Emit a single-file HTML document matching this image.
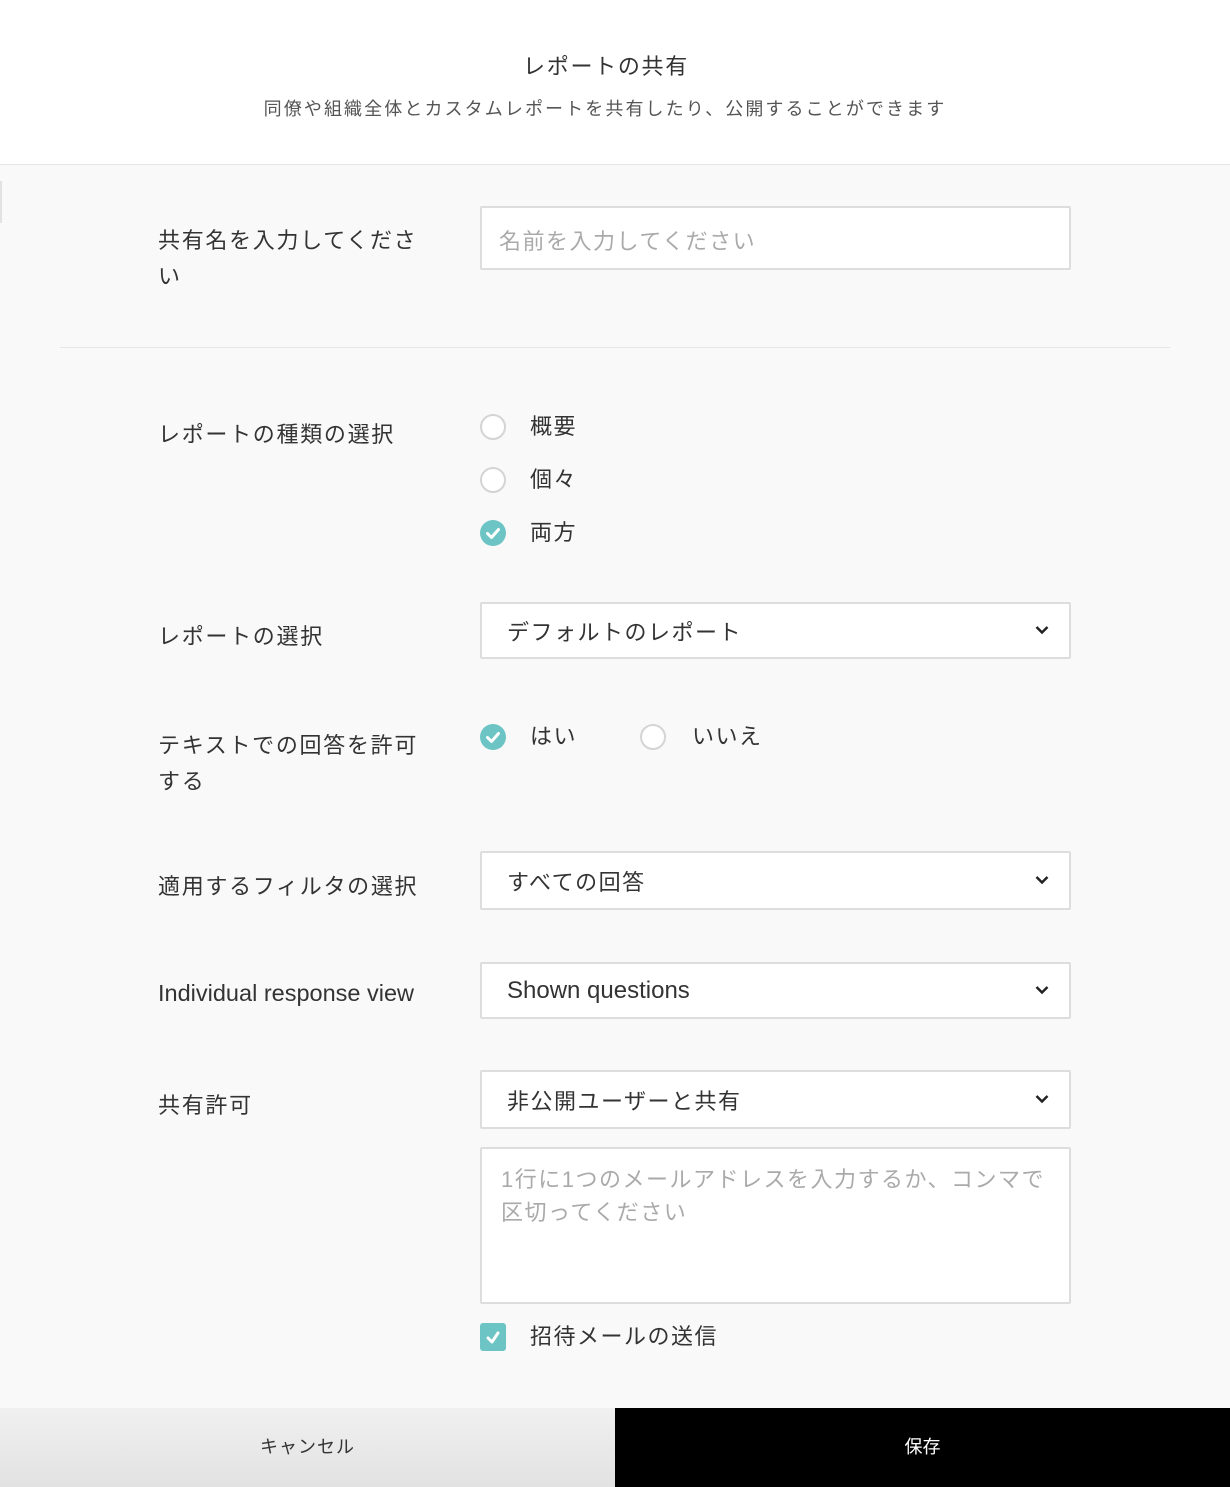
<!DOCTYPE html>
<html><head><meta charset="utf-8"><style>
*{margin:0;padding:0;box-sizing:border-box}
body{width:1230px;height:1487px;background:#f9f9f9;font-family:"Liberation Sans","Noto Sans CJK JP",sans-serif;color:#333;position:relative;overflow:hidden}
.a{position:absolute}
.hdr{left:0;top:0;width:1230px;height:165px;background:#fff;border-bottom:1px solid #e6e6e6}
.lbl{font-size:22px;letter-spacing:1.7px;line-height:36px;color:#333;left:158px;width:266px}
.box{left:480px;width:591px;background:#fff;border:2px solid #ddd;border-radius:2px;font-size:22px;letter-spacing:1.5px;color:#333}
.sel{padding-left:25px;display:flex;align-items:center}
.sel svg{position:absolute;right:20px;top:50%;margin-top:-6px}
.r{width:26px;height:26px;border-radius:50%;border:2px solid #d4d4d4;background:#fff}
.rc{width:26px;height:26px;border-radius:50%;background:#6cc5c4}
.opt{font-size:22px;letter-spacing:1.5px;color:#333;line-height:30px}
</style></head><body>
<div class="a hdr"></div>
<div class="a" style="left:-9px;top:49px;width:1230px;text-align:center;font-size:22px;letter-spacing:1.7px;color:#333">レポートの共有</div>
<div class="a" style="left:-10px;top:95px;width:1230px;text-align:center;font-size:18px;letter-spacing:2.1px;color:#555">同僚や組織全体とカスタムレポートを共有したり、公開することができます</div>
<div class="a" style="left:0;top:181px;width:2px;height:42px;background:#e2e2e2"></div>

<div class="a lbl" style="top:223px">共有名を入力してください</div>
<div class="a box" style="top:206px;height:64px;padding:16px 0 0 17px;color:#aaa">名前を入力してください</div>
<div class="a" style="left:60px;top:347px;width:1110px;height:1px;background:#e6e6e6"></div>

<div class="a lbl" style="top:417px">レポートの種類の選択</div>
<div class="a r" style="left:480px;top:414px"></div><div class="a opt" style="left:530px;top:412px">概要</div>
<div class="a r" style="left:480px;top:467px"></div><div class="a opt" style="left:530px;top:465px">個々</div>
<div class="a rc" style="left:480px;top:520px"><svg width="26" height="26"><path d="M7.5 13.5l4 4 7-8" stroke="#fff" stroke-width="3" fill="none" stroke-linecap="round" stroke-linejoin="round"/></svg></div><div class="a opt" style="left:530px;top:518px">両方</div>

<div class="a lbl" style="top:619px">レポートの選択</div>
<div class="a box sel" style="top:602px;height:57px">デフォルトのレポート<svg width="14" height="10"><path d="M1.5 2l5.5 5.5 5.5-5.5" stroke="#222" stroke-width="2.5" fill="none"/></svg></div>

<div class="a lbl" style="top:728px">テキストでの回答を許可する</div>
<div class="a rc" style="left:480px;top:724px"><svg width="26" height="26"><path d="M7.5 13.5l4 4 7-8" stroke="#fff" stroke-width="3" fill="none" stroke-linecap="round" stroke-linejoin="round"/></svg></div><div class="a opt" style="left:530px;top:722px">はい</div>
<div class="a r" style="left:640px;top:724px"></div><div class="a opt" style="left:692px;top:722px">いいえ</div>

<div class="a lbl" style="top:869px">適用するフィルタの選択</div>
<div class="a box sel" style="top:851px;height:59px">すべての回答<svg width="14" height="10"><path d="M1.5 2l5.5 5.5 5.5-5.5" stroke="#222" stroke-width="2.5" fill="none"/></svg></div>

<div class="a lbl" style="top:975px;letter-spacing:0;font-size:23.5px;width:300px">Individual response view</div>
<div class="a box sel" style="top:962px;height:57px;letter-spacing:0;font-size:24px">Shown questions<svg width="14" height="10"><path d="M1.5 2l5.5 5.5 5.5-5.5" stroke="#222" stroke-width="2.5" fill="none"/></svg></div>

<div class="a lbl" style="top:1088px">共有許可</div>
<div class="a box sel" style="top:1070px;height:59px">非公開ユーザーと共有<svg width="14" height="10"><path d="M1.5 2l5.5 5.5 5.5-5.5" stroke="#222" stroke-width="2.5" fill="none"/></svg></div>
<div class="a box" style="top:1147px;height:157px;padding:14px 10px 0 19px;color:#aaa;line-height:33px;letter-spacing:1.5px">1行に1つのメールアドレスを入力するか、コンマで<br>区切ってください</div>

<div class="a" style="left:480px;top:1323px;width:26px;height:28px;background:#6cc5c4;border-radius:3px"><svg width="26" height="28"><path d="M8 15l4 4 6-9" stroke="#fff" stroke-width="3" fill="none" stroke-linecap="round" stroke-linejoin="round"/></svg></div>
<div class="a opt" style="left:530px;top:1322px">招待メールの送信</div>

<div class="a" style="left:0;top:1408px;width:615px;height:79px;background:linear-gradient(#f0f0f0,#e2e2e2);text-align:center;line-height:79px;font-size:18px;letter-spacing:1px;color:#333">キャンセル</div>
<div class="a" style="left:615px;top:1408px;width:615px;height:79px;background:#000;text-align:center;line-height:79px;font-size:18px;color:#fff">保存</div>
</body></html>
